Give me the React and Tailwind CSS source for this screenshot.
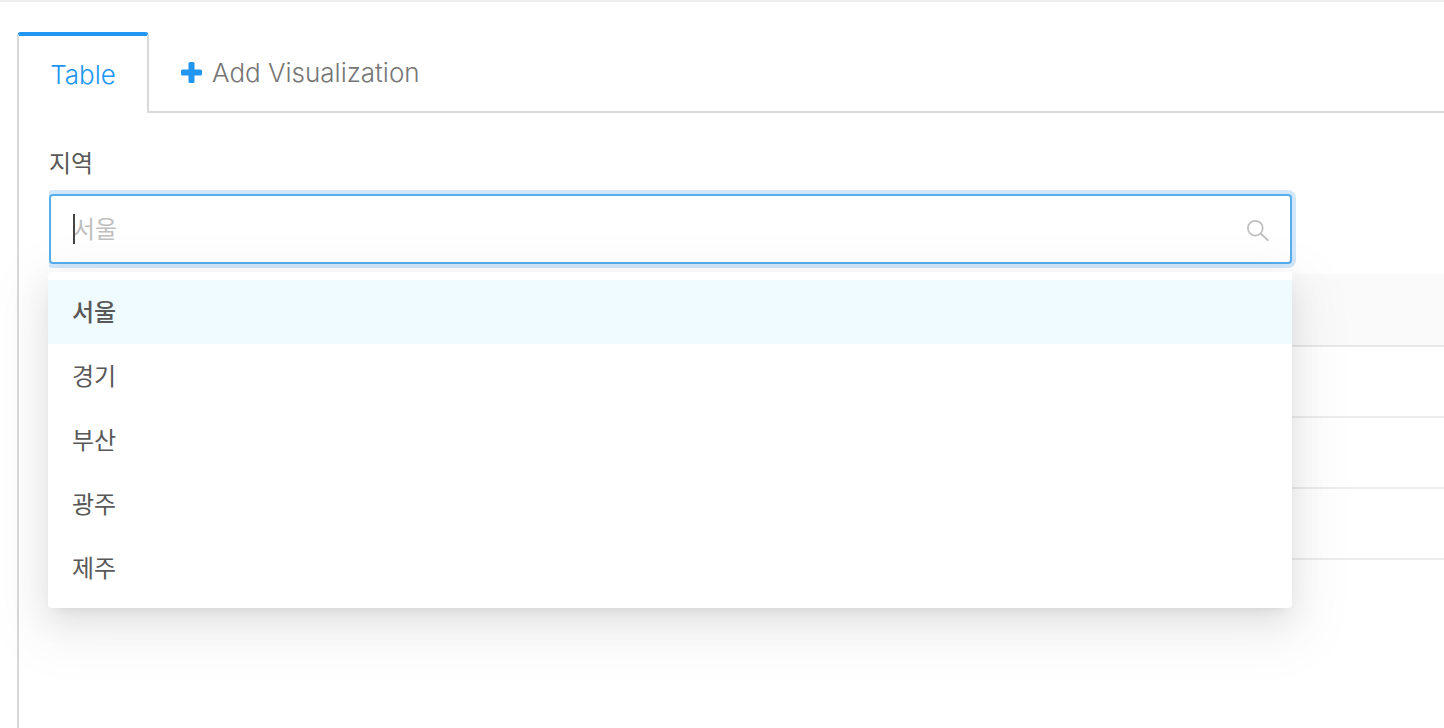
import React, { useState } from 'react';

const regions = ['서울', '경기', '부산', '광주', '제주'];
const rows = [1, 2, 3];

function PlusIcon() {
  return (
    <svg width="21" height="21" viewBox="0 0 21 21" fill="#2196f3" aria-hidden="true">
      <rect x="0" y="7.5" width="21" height="6" rx="1.5" />
      <rect x="7.5" y="0" width="6" height="21" rx="1.5" />
    </svg>
  );
}

function SearchIcon() {
  return (
    <svg width="24" height="24" viewBox="0 0 24 24" fill="none" stroke="#bfbfbf" strokeWidth="1.8" aria-hidden="true">
      <circle cx="9.3" cy="11.2" r="7.4" />
      <path d="M14.6 16.5L22.3 23.7" />
    </svg>
  );
}

function RegionSelect() {
  const [selected, setSelected] = useState('서울');
  const [search, setSearch] = useState('');

  return (
    <div className="relative mr-[152px]">
      <div className="ml-px [clip-path:inset(-8px_-8px_-8px_0)]">
        <div className="flex items-center h-[70px] px-5 bg-white border-2 border-[#57aeee] rounded-sm ring-4 ring-[#d3e7fa]">
          <div className="relative flex-1 flex items-center">
            <input
              id="region"
              type="text"
              role="combobox"
              aria-expanded="true"
              aria-controls="region-list"
              value={search}
              onChange={e => setSearch(e.target.value)}
              placeholder={selected}
              className="w-full px-0.5 pt-0.5 text-2xl text-[#595959] placeholder:text-[#bfbfbf] outline-none"
            />
            {search === '' && <span className="absolute left-0.5 w-0.5 h-[30px] bg-[#444]" />}
          </div>
          <SearchIcon />
        </div>
      </div>

      <ul
        id="region-list"
        role="listbox"
        aria-label="지역"
        className="absolute z-10 top-full inset-x-0 mt-2 py-2 bg-white rounded-sm shadow-[0_6px_12px_-8px_rgba(0,0,0,0.12),0_12px_32px_0_rgba(0,0,0,0.08),0_18px_56px_16px_rgba(0,0,0,0.05)]"
      >
        {regions.map(region => (
          <li
            key={region}
            role="option"
            aria-selected={region === selected}
            onClick={() => setSelected(region)}
            className={`flex items-center h-16 px-6 pt-0.5 text-2xl text-[#595959] cursor-pointer ${region === selected ? 'bg-[#effbff] font-medium' : ''}`}
          >
            {region}
          </li>
        ))}
      </ul>
    </div>
  );
}

export default function App() {
  return (
    <div className="h-screen overflow-hidden flex flex-col pt-[30px] pl-[17px] bg-white border-t-2 border-[#eee] font-['Inter','Noto_Sans_CJK_KR',sans-serif]">
      <div role="tablist" className="flex h-[81px]">
        <button
          role="tab"
          aria-selected="true"
          className="w-[132px] border-x-2 border-t-4 border-x-[#d9d9d9] border-t-[#2196f3] rounded-t-sm text-[26px] font-[350] text-[#2196f3]"
        >
          Table
        </button>
        <div className="flex-1 flex items-center pl-8 pt-0.5 border-b-2 border-[#d9d9d9]">
          <button className="flex items-center gap-2.5 text-[26px] font-[350] text-[#767676]">
            <PlusIcon /> Add Visualization
          </button>
        </div>
      </div>

      <div role="tabpanel" className="flex-1 pt-[33px] pl-[29px] border-l-2 border-[#d9d9d9]">
        <label htmlFor="region" className="block pl-px mb-3 text-2xl leading-9 text-[#595959]">지역</label>
        <RegionSelect />

        <table className="w-full mt-2.5 border-separate border-spacing-0">
          <thead>
            <tr>
              <th aria-label="지역" className="h-[73px] bg-[#fafafa] border-b-2 border-[#e8e8e8]" />
            </tr>
          </thead>
          <tbody>
            {rows.map(row => (
              <tr key={row}>
                <td className="h-[71px] border-b-2 border-[#ededed]" />
              </tr>
            ))}
          </tbody>
        </table>
      </div>
    </div>
  );
}
